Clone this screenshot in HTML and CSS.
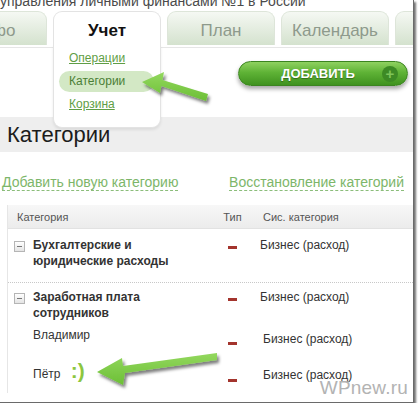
FILE: index.html
```html
<!DOCTYPE html>
<html lang="ru">
<head>
  <meta charset="UTF-8" />
  <title>Категории</title>
  <link rel="stylesheet" href="styles.css">
</head>
<body>
  <div class="frame">
    <div class="slogan">управления личными финансами №1 в России</div>

    <div class="tabs">
      <div class="tab">Инфо</div>
      <div class="tab active">
        Учет
        <div class="submenu">
          <a href="#" class="sub-link">Операции</a>
          <a href="#" class="sub-link current">Категории</a>
          <a href="#" class="sub-link">Корзина</a>
        </div>
      </div>
      <div class="tab">План</div>
      <div class="tab">Календарь</div>
      <div class="tab">Отчеты</div>
    </div>

    <div class="toolbar">
      <button class="add-btn">ДОБАВИТЬ<span class="plus">+</span></button>
    </div>

    <h1 class="title">Категории</h1>

    <div class="actions">
      <a href="#" class="dashed">Добавить новую категорию</a>
      <a href="#" class="dashed">Восстановление категорий</a>
    </div>

    <div class="table">
      <div class="row head">
        <div class="c-name">Категория</div>
        <div class="c-type">Тип</div>
        <div class="c-sys">Сис. категория</div>
      </div>

      <div class="group first">
        <div class="row main">
          <div class="c-name"><span class="toggle"></span><span class="label">Бухгалтерские и юридические расходы</span></div>
          <div class="c-type"><span class="dash"></span></div>
          <div class="c-sys">Бизнес (расход)</div>
        </div>
      </div>

      <div class="group">
        <div class="row main">
          <div class="c-name"><span class="toggle"></span><span class="label">Заработная плата сотрудников</span></div>
          <div class="c-type"><span class="dash"></span></div>
          <div class="c-sys">Бизнес (расход)</div>
        </div>
        <div class="row sub">
          <div class="c-name">Владимир</div>
          <div class="c-type"><span class="dash near"></span></div>
          <div class="c-sys">Бизнес (расход)</div>
        </div>
        <div class="row sub">
          <div class="c-name">Пётр <span class="smile">:)</span></div>
          <div class="c-type"><span class="dash"></span></div>
          <div class="c-sys">Бизнес (расход)</div>
        </div>
      </div>
    </div>

    <div class="watermark">WPnew.ru</div>

    <svg class="arrows" width="413" height="402" viewBox="0 0 413 402">
      <defs>
        <filter id="shadow" x="-20%" y="-40%" width="140%" height="180%">
          <feDropShadow dx="2" dy="3" stdDeviation="1.6" flood-color="#000" flood-opacity="0.5"/>
        </filter>
        <linearGradient id="green" x1="0" y1="0" x2="0" y2="1">
          <stop offset="0" stop-color="#93d85e"/>
          <stop offset="1" stop-color="#6cbf36"/>
        </linearGradient>
      </defs>
      <polygon filter="url(#shadow)" fill="url(#green)"
        points="142,82 164,72 162.5,80 208,94 206,101 161.4,86 160,93"/>
      <polygon filter="url(#shadow)" fill="url(#green)"
        points="97,372 122,358 123,366 217,353 217,360 125,373 123,385"/>
    </svg>
  </div>
</body>
</html>
```

FILE: styles.css
```css
body { margin: 0; background: #fff; font-family: "Liberation Sans", Arial, sans-serif; }
.frame { position: relative; width: 413px; height: 402px; overflow: hidden; background: #fff; border-right: 1px solid #6a6a6a; border-bottom: 1px solid #6a6a6a; box-shadow: 2px 2px 2px rgba(0,0,0,0.55); }

.slogan { font-size: 14px; line-height: 16px; color: #4a4a4a; margin: -7px 0 0 0; white-space: nowrap; }

.tabs { display: flex; gap: 6px; margin: 2px 0 0 -61px; height: 34px; }
.tab { flex: 0 0 108px; box-sizing: border-box; height: 34px; padding-top: 3px; line-height: 31px; text-align: center; font-size: 17px; color: #8e9a8c; border: 1px solid #dde5d9; border-bottom: 0; border-radius: 9px 9px 0 0; background: linear-gradient(#f5f8f3, #d4e2ce); }
.tab.active { position: relative; z-index: 3; background: #fff; color: #111; font-weight: bold; border-color: #e3e3e3; }

.submenu { position: absolute; top: 100%; left: -1px; right: -1px; padding: 3px 0 10px; background: #fff; border: 1px solid #e3e3e3; border-top: 0; border-radius: 0 0 9px 9px; box-shadow: 0 2px 3px rgba(0,0,0,0.08); text-align: left; font-weight: normal; }
.sub-link { display: block; margin: 0 6px 2px 5px; padding-left: 10px; font-size: 12px; line-height: 21px; color: #5f9e45; text-decoration: underline; }
.sub-link.current { background: #d3e8c5; border-radius: 11px; color: #4b7f36; text-decoration: none; }

.toolbar { height: 70px; margin-top: 2px; border-top: 1px solid #e6e6e6; box-sizing: border-box; padding: 13px 5px 0 0; display: flex; justify-content: flex-end; align-items: flex-start; }
.add-btn { position: relative; width: 170px; height: 25px; border: 1px solid #3b8420; border-radius: 13px; background: linear-gradient(#8fd160, #5fb336 45%, #3f921f); color: #fff; font: bold 13px "Liberation Sans", Arial, sans-serif; text-shadow: 0 1px 1px rgba(0,0,0,0.35); box-shadow: 0 3px 4px rgba(0,0,0,0.35); padding: 0 10px 0 0; }
.plus { position: absolute; right: 9px; top: 4px; width: 16px; height: 16px; border-radius: 50%; background: #3d8a25; color: #7fc45a; font-size: 15px; line-height: 16px; text-shadow: none; }

.title { margin: 0; height: 35px; padding-left: 7px; background: #eeeeee; font-size: 22px; font-weight: normal; line-height: 35px; color: #1c1c1c; }

.actions { display: flex; justify-content: space-between; margin: 22px 9px 0 2px; font-size: 14px; line-height: 16px; }
.dashed { color: #7db66a; text-decoration: none; border-bottom: 1px dashed #8bbd7a; }

.table { margin: 14px 0 0 7px; border-left: 1px solid #e6e6e6; font-size: 12px; color: #333; }
.row { display: grid; grid-template-columns: 207px 35px 1fr; line-height: 16px; }
.row.head { height: 24px; line-height: 24px; font-size: 11px; color: #555; background: linear-gradient(#f7f7f7, #ececec); border-bottom: 1px solid #e2e2e2; box-sizing: border-box; }
.head .c-name { padding-left: 9px; }
.head .c-type { text-align: center; }
.head .c-sys { padding-left: 13px; }

.group { border-bottom: 1px dotted #c8c8c8; }
.group:last-child { border-bottom: 0; }
.main { padding: 6px 0 0; }
.group.first .main { padding: 8px 0 13px; }
.main .c-name { display: flex; gap: 8px; padding-left: 6px; }
.label { max-width: 145px; font-weight: bold; color: #333; }
.toggle { position: relative; flex: 0 0 9px; height: 9px; margin-top: 4px; border: 1px solid #b5b5b5; background: linear-gradient(#fff, #e4e4e4); }
.toggle::after { content: ""; position: absolute; left: 2px; right: 2px; top: 4px; height: 1px; background: #777; }
.c-type { display: flex; justify-content: center; align-items: flex-start; }
.dash { display: block; width: 9px; height: 3px; margin-top: 9px; background: #a3342d; }
.main .c-sys { padding-left: 10px; }

.sub { height: 36px; padding-top: 6px; box-sizing: border-box; }
.sub .c-name { padding-left: 25px; }
.sub .c-sys { padding: 4px 0 0 13px; }
.sub .dash { margin-top: 16px; }
.sub .dash.near { margin-top: 15px; }
.smile { margin-left: 7px; font-size: 21px; font-weight: bold; color: #8cc63f; line-height: 16px; }

.watermark { position: absolute; right: 5px; bottom: 3px; font-size: 19px; color: #b3b3b3; letter-spacing: 0.2px; }
.arrows { position: absolute; top: 0; left: 0; z-index: 5; pointer-events: none; }
```
